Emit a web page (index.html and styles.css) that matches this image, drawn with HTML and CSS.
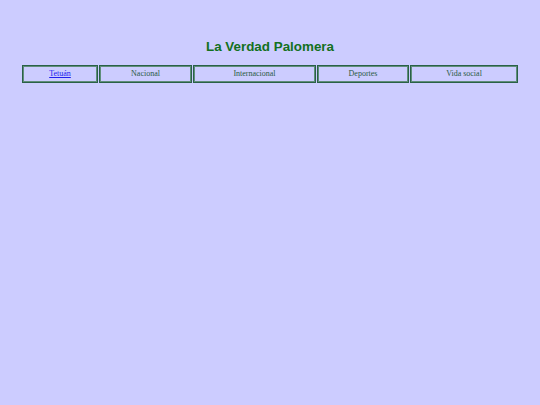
FILE: index.html
```html
<!DOCTYPE html>
<html lang="es">
<head>
<meta charset="utf-8">
<title>La Verdad Palomera</title>
<link rel="stylesheet" href="styles.css">
</head>
<body>
<h1 class="title">La Verdad Palomera</h1>
<table class="nav">
  <tr>
    <td class="c1"><a href="#">Tetuán</a></td>
    <td class="c2">Nacional</td>
    <td class="c3">Internacional</td>
    <td class="c4">Deportes</td>
    <td class="c5">Vida social</td>
  </tr>
</table>
</body>
</html>
```
FILE: styles.css
```css
html, body {
  margin: 0;
  padding: 0;
  background: #ccccff;
}
body {
  padding: 8px;
}
.title {
  font-family: "Liberation Sans", Arial, sans-serif;
  font-size: 13.4px;
  font-weight: bold;
  color: #137020;
  text-align: center;
  margin: 30px 0 9px 0;
  line-height: 17px;
}
.nav {
  width: calc(100% - 28px);
  margin: 0 15px 0 13px;
  border-collapse: separate;
  border-spacing: 1px;
  table-layout: fixed;
}
.nav td {
  border: 1px solid #2a6048;
  box-shadow: inset 0 0 0 1px #5f8e7a;
  font-family: "Liberation Serif", "Times New Roman", serif;
  font-size: 8px;
  color: #2a5a44;
  text-align: center;
  height: 14px;
  padding: 0 1px 2px 1px;
}
.nav a {
  color: #2020ee;
  text-decoration: underline;
}
.c1 { width: 72px; }
.c2 { width: 89px; }
.c3 { width: 119px; }
.c4 { width: 88px; }
.c5 { width: 104px; }
```
